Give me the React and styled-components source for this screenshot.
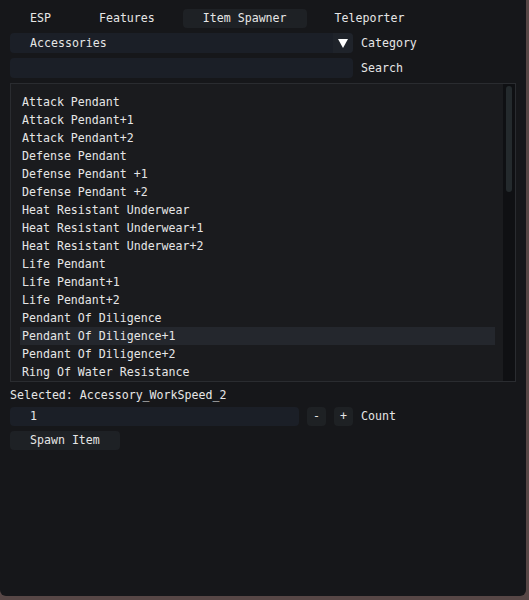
import React, { useState } from 'react';
import styled, { createGlobalStyle } from 'styled-components';

const GlobalStyle = createGlobalStyle`
  html, body {
    margin: 0;
    padding: 0;
    background: #574746;
    height: 600px;
    overflow: hidden;
  }
  body {
    font-family: 'DejaVu Sans Mono', 'Liberation Mono', monospace;
    font-size: 11.6px;
    color: #e6e6e6;
  }
`;

const Window = styled.div`
  width: 526px;
  height: 596px;
  box-sizing: border-box;
  background: #16171a;
  border-radius: 0 0 6px 6px;
  padding: 9px 10px;
  display: flex;
  flex-direction: column;
  gap: 5px;
`;

const TabBar = styled.div`
  display: flex;
  gap: 8px;
`;

const Tab = styled.div`
  height: 19px;
  line-height: 19px;
  padding: 0 20px;
  border-radius: 4px;
  background: ${props => props.active ? '#1e2125' : 'transparent'};
  cursor: pointer;
  white-space: nowrap;
`;

const Row = styled.div`
  display: flex;
  align-items: center;
  gap: 8px;
  height: 20px;
`;

const Combo = styled.div`
  width: 343px;
  height: 20px;
  display: flex;
  background: #1b1f27;
  border-radius: 4px;
  overflow: hidden;
`;

const ComboText = styled.div`
  flex: 1;
  line-height: 20px;
  padding-left: 20px;
`;

const ComboArrow = styled.div`
  width: 20px;
  display: flex;
  align-items: center;
  justify-content: center;
  background: #1f232a;
`;

const TextInput = styled.input`
  width: ${props => props.width}px;
  height: ${props => props.h || 20}px;
  box-sizing: border-box;
  border: none;
  outline: none;
  background: #1b1f27;
  border-radius: 4px;
  padding: 0 0 0 20px;
  color: #e6e6e6;
  font: inherit;
`;

const Label = styled.span`
  white-space: nowrap;
`;

const ListBox = styled.div`
  height: 299px;
  width: 506px;
  box-sizing: border-box;
  border: 1px solid #2a2c30;
  background: #1a1b1e;
  display: flex;
`;

const Items = styled.div`
  flex: 1;
  overflow: hidden;
  padding: 9px 8px 0 9px;
`;

const Item = styled.div`
  height: 18px;
  line-height: 18px;
  padding-left: 2px;
  white-space: nowrap;
  background: ${props => props.selected ? '#24272d' : 'transparent'};
  cursor: pointer;
`;

const ScrollTrack = styled.div`
  width: 12px;
  background: #0f1013;
  padding: 2px 3px;
  box-sizing: border-box;
`;

const ScrollGrab = styled.div`
  height: 106px;
  border-radius: 3px;
  background: #242a2d;
`;

const SelectedLine = styled.div`
  height: 16px;
  line-height: 16px;
  margin-bottom: -2px;
  white-space: nowrap;
`;

const SmallButton = styled.div`
  width: 19px;
  height: 19px;
  line-height: 19px;
  text-align: center;
  border-radius: 4px;
  background: #1e2124;
  cursor: pointer;
`;

const SpawnButton = styled.div`
  width: 110px;
  height: 19px;
  line-height: 19px;
  box-sizing: border-box;
  padding-left: 20px;
  border-radius: 4px;
  background: #1e2125;
  cursor: pointer;
`;

const tabs = ['ESP', 'Features', 'Item Spawner', 'Teleporter'];

// only the rows that fit in the list box are shown
const items = [
  'Attack Pendant',
  'Attack Pendant+1',
  'Attack Pendant+2',
  'Defense Pendant',
  'Defense Pendant +1',
  'Defense Pendant +2',
  'Heat Resistant Underwear',
  'Heat Resistant Underwear+1',
  'Heat Resistant Underwear+2',
  'Life Pendant',
  'Life Pendant+1',
  'Life Pendant+2',
  'Pendant Of Diligence',
  'Pendant Of Diligence+1',
  'Pendant Of Diligence+2',
  'Ring Of Water Resistance'
];

const App = () => {
  const [activeTab, setActiveTab] = useState('Item Spawner');
  const [selected, setSelected] = useState(13);
  const [count, setCount] = useState(1);

  return (
    <>
      <GlobalStyle />
      <Window>
        <TabBar>
          {tabs.map(tab => (
            <Tab key={tab} active={tab === activeTab} onClick={() => setActiveTab(tab)}>{tab}</Tab>
          ))}
        </TabBar>
        <Row>
          <Combo>
            <ComboText>Accessories</ComboText>
            <ComboArrow>
              <svg width='10' height='9' viewBox='0 0 10 9'>
                <polygon points='0,0 10,0 5,9' fill='#ffffff' />
              </svg>
            </ComboArrow>
          </Combo>
          <Label>Category</Label>
        </Row>
        <Row>
          <TextInput width={343} defaultValue='' />
          <Label>Search</Label>
        </Row>
        <ListBox>
          <Items>
            {items.map((item, i) => (
              <Item key={item} selected={i === selected} onClick={() => setSelected(i)}>{item}</Item>
            ))}
          </Items>
          <ScrollTrack>
            <ScrollGrab />
          </ScrollTrack>
        </ListBox>
        <SelectedLine>Selected: Accessory_WorkSpeed_2</SelectedLine>
        <Row>
          <TextInput width={289} h={19} value={count} onChange={e => setCount(e.target.value)} />
          <SmallButton onClick={() => setCount(c => Math.max(1, Number(c) - 1))}>-</SmallButton>
          <SmallButton onClick={() => setCount(c => Number(c) + 1)}>+</SmallButton>
          <Label>Count</Label>
        </Row>
        <SpawnButton>Spawn Item</SpawnButton>
      </Window>
    </>
  );
};

export default App;
